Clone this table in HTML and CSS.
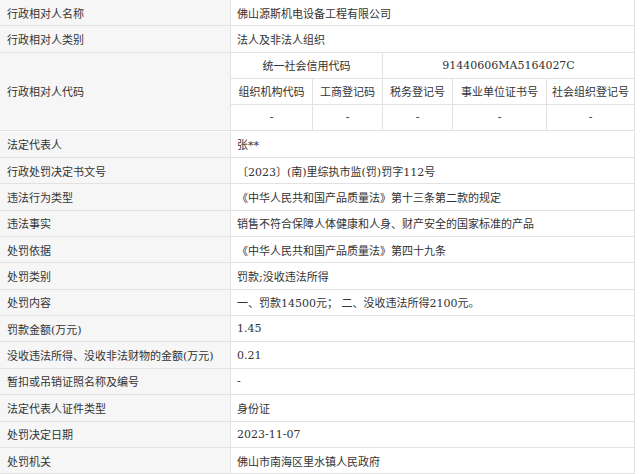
FILE: index.html
```html
<!DOCTYPE html>
<html lang="zh-CN">
<head>
<meta charset="utf-8">
<title>行政处罚信息</title>
<link rel="stylesheet" href="styles.css">
</head>
<body>
<div class="table">
  <div class="label">行政相对人名称</div>
  <div class="value">佛山源斯机电设备工程有限公司</div>

  <div class="label">行政相对人类别</div>
  <div class="value">法人及非法人组织</div>

  <div class="label tall">行政相对人代码</div>
  <div class="value tall nested">
    <div class="sub span2">统一社会信用代码</div>
    <div class="sub span3 last">91440606MA5164027C</div>
    <div class="sub">组织机构代码</div>
    <div class="sub">工商登记码</div>
    <div class="sub">税务登记号</div>
    <div class="sub">事业单位证书号</div>
    <div class="sub last">社会组织登记号</div>
    <div class="sub bottom">-</div>
    <div class="sub bottom">-</div>
    <div class="sub bottom">-</div>
    <div class="sub bottom">-</div>
    <div class="sub bottom last">-</div>
  </div>

  <div class="label">法定代表人</div>
  <div class="value">张**</div>

  <div class="label">行政处罚决定书文号</div>
  <div class="value">〔2023〕(南)里综执市监(罚)罚字112号</div>

  <div class="label">违法行为类型</div>
  <div class="value">《中华人民共和国产品质量法》第十三条第二款的规定</div>

  <div class="label">违法事实</div>
  <div class="value">销售不符合保障人体健康和人身、财产安全的国家标准的产品</div>

  <div class="label">处罚依据</div>
  <div class="value">《中华人民共和国产品质量法》第四十九条</div>

  <div class="label">处罚类别</div>
  <div class="value">罚款;没收违法所得</div>

  <div class="label">处罚内容</div>
  <div class="value">一、罚款14500元； 二、没收违法所得2100元。</div>

  <div class="label">罚款金额(万元)</div>
  <div class="value">1.45</div>

  <div class="label">没收违法所得、没收非法财物的金额(万元)</div>
  <div class="value">0.21</div>

  <div class="label">暂扣或吊销证照名称及编号</div>
  <div class="value">-</div>

  <div class="label">法定代表人证件类型</div>
  <div class="value">身份证</div>

  <div class="label">处罚决定日期</div>
  <div class="value">2023-11-07</div>

  <div class="label">处罚机关</div>
  <div class="value">佛山市南海区里水镇人民政府</div>
</div>
</body>
</html>
```

FILE: styles.css
```css
html, body {
  margin: 0;
  padding: 0;
  background: #ffffff;
}

body {
  font-family: "DejaVu Serif", "Noto Sans CJK SC", serif;
  font-size: 11px;
  color: #333333;
}

.table {
  display: grid;
  grid-template-columns: 231px 404px;
  grid-auto-rows: 26.35px;
  width: 635px;
  border-top: 1px solid #e2e2e2;
  box-sizing: border-box;
  margin-top: -1px;
}

.label,
.value {
  display: flex;
  align-items: center;
  box-sizing: border-box;
  border-bottom: 1px solid #e2e2e2;
  border-right: 1px solid #e2e2e2;
  padding-left: 6px;
  white-space: nowrap;
  overflow: hidden;
}

.label {
  background: #f6f6f6;
  padding-left: 7px;
}

.value {
  background: #ffffff;
}

.tall {
  grid-row: span 3;
  height: 78px;
}

.nested {
  display: grid;
  grid-template-columns: 82px 70px 70px 94px 1fr;
  grid-template-rows: 26px 26px 1fr;
  padding-left: 0;
  align-items: stretch;
}

.sub {
  display: flex;
  align-items: center;
  justify-content: center;
  box-sizing: border-box;
  border-right: 1px solid #e2e2e2;
  border-bottom: 1px solid #e2e2e2;
  white-space: nowrap;
}

.sub.last {
  border-right: none;
}

.sub.bottom {
  border-bottom: none;
}

.span2 {
  grid-column: span 2;
}

.span3 {
  grid-column: span 3;
}
```
